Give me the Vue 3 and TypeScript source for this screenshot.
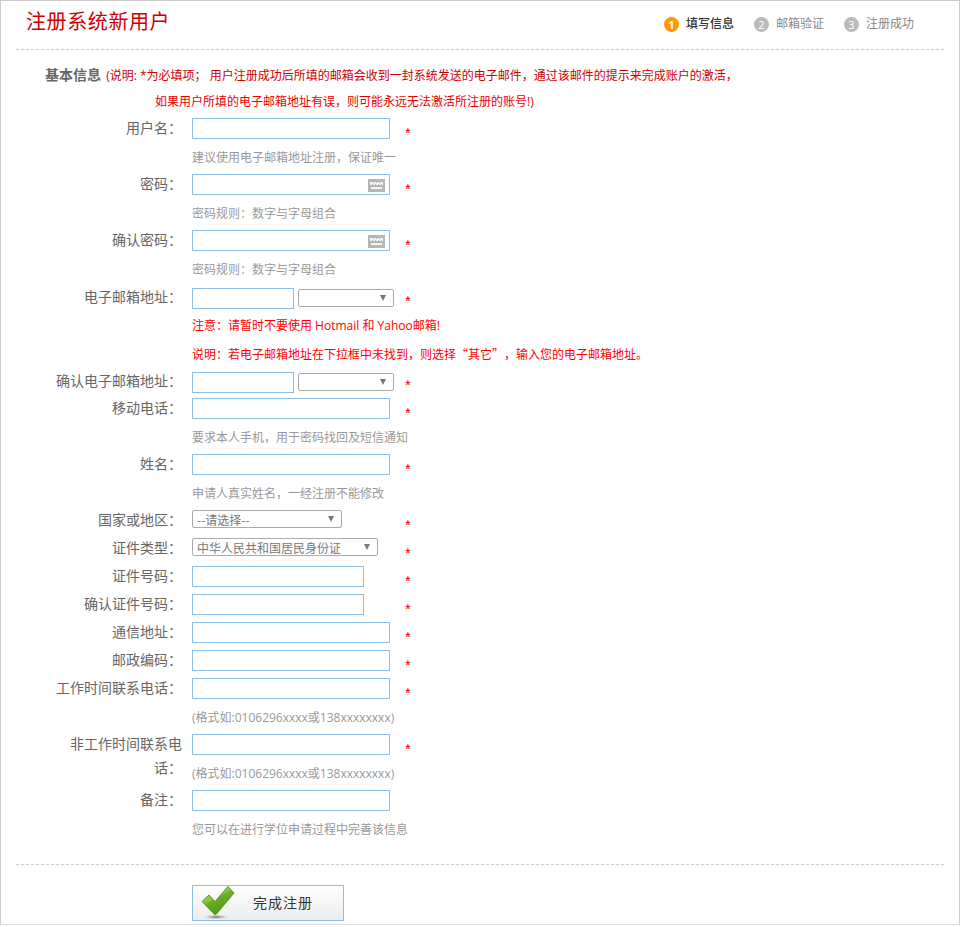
<script setup lang="ts">
type Kind = 'input' | 'short' | 'password' | 'email' | 'select'
interface Row {
  label?: string
  kind?: Kind
  help?: string
  note?: string
  options?: string
  selectWidth?: number
  star?: boolean
  cjkOnly?: boolean
}

const rows: Row[] = [
  { label: '用户名：', kind: 'input', star: true },
  { help: '建议使用电子邮箱地址注册，保证唯一' },
  { label: '密码：', kind: 'password', star: true },
  { help: '密码规则：数字与字母组合' },
  { label: '确认密码：', kind: 'password', star: true },
  { help: '密码规则：数字与字母组合' },
  { label: '电子邮箱地址：', kind: 'email', star: true },
  { note: '注意：请暂时不要使用 Hotmail 和 Yahoo邮箱!' },
  { note: '说明：若电子邮箱地址在下拉框中未找到，则选择“其它”，输入您的电子邮箱地址。', cjkOnly: true },
  { label: '确认电子邮箱地址：', kind: 'email', star: true },
  { label: '移动电话：', kind: 'input', star: true },
  { help: '要求本人手机，用于密码找回及短信通知' },
  { label: '姓名：', kind: 'input', star: true },
  { help: '申请人真实姓名，一经注册不能修改' },
  { label: '国家或地区：', kind: 'select', options: '--请选择--', selectWidth: 150, star: true },
  { label: '证件类型：', kind: 'select', options: '中华人民共和国居民身份证', selectWidth: 186, star: true },
  { label: '证件号码：', kind: 'short', star: true },
  { label: '确认证件号码：', kind: 'short', star: true },
  { label: '通信地址：', kind: 'input', star: true },
  { label: '邮政编码：', kind: 'input', star: true },
  { label: '工作时间联系电话：', kind: 'input', star: true },
  { help: '(格式如:0106296xxxx或138xxxxxxxx)' },
  { label: '非工作时间联系电话：', kind: 'input', star: true },
  { help: '(格式如:0106296xxxx或138xxxxxxxx)' },
  { label: '备注：', kind: 'input' },
  { help: '您可以在进行学位申请过程中完善该信息' },
]

const steps = [
  { n: 1, text: '填写信息', active: true },
  { n: 2, text: '邮箱验证', active: false },
  { n: 3, text: '注册成功', active: false },
]
</script>

<template>
  <div class="page">
    <header class="head">
      <h1 class="title">注册系统新用户</h1>
      <ol class="steps">
        <li v-for="s in steps" :key="s.n" class="step" :class="{ active: s.active }">
          <span class="dot">{{ s.n }}</span>
          <span>{{ s.text }}</span>
        </li>
      </ol>
    </header>

    <section class="intro">
      <p class="intro-line"><b class="section">基本信息</b> <span class="intro-red">(说明: *为必填项； 用户注册成功后所填的邮箱会收到一封系统发送的电子邮件，通过该邮件的提示来完成账户的激活，</span></p>
      <p class="intro-line second">如果用户所填的电子邮箱地址有误，则可能永远无法激活所注册的账号!)</p>
    </section>

    <form class="form" @submit.prevent>
      <div v-for="(r, i) in rows" :key="i" class="row" :class="{ 'row-email': r.kind === 'email' }">
        <label class="label">{{ r.label }}</label>
        <div class="control">
          <input v-if="r.kind === 'input'" class="field" type="text" />
          <input v-else-if="r.kind === 'short'" class="field field-short" type="text" />
          <span v-else-if="r.kind === 'password'" class="pw">
            <input class="field" type="password" />
            <svg class="kbd" width="17" height="13" viewBox="0 0 17 13">
              <rect width="17" height="13" fill="#b6b6b6" />
              <rect x="2" y="3" width="13" height="3" fill="#f4f4f4" />
              <rect x="3" y="8" width="11" height="2" fill="#f4f4f4" />
              <g fill="#b6b6b6">
                <rect x="5" y="3" width="1" height="1" />
                <rect x="8" y="3" width="1" height="1" />
                <rect x="11" y="3" width="1" height="1" />
                <rect x="4" y="5" width="1" height="1" />
                <rect x="7" y="5" width="1" height="1" />
                <rect x="10" y="5" width="1" height="1" />
                <rect x="13" y="5" width="1" height="1" />
              </g>
            </svg>
          </span>
          <template v-else-if="r.kind === 'email'">
            <input class="field field-mail" type="text" />
            <span class="sel-wrap sel-mail">
              <select class="sel"><option></option></select>
            </span>
          </template>
          <span v-else-if="r.kind === 'select'" class="sel-wrap" :style="{ width: r.selectWidth + 'px' }">
            <select class="sel"><option>{{ r.options }}</option></select>
          </span>
          <span v-else-if="r.help" class="help">{{ r.help }}</span>
          <span v-else-if="r.note" class="note" :class="{ 'note-cjk': r.cjkOnly }">{{ r.note }}</span>
        </div>
        <span v-if="r.star" class="star">*</span>
      </div>
    </form>

    <footer class="foot">
      <button class="submit" type="button">
        <svg class="check" width="36" height="34" viewBox="0 0 36 34">
          <defs>
            <linearGradient id="chk" x1="0" y1="0" x2="0.6" y2="1">
              <stop offset="0" stop-color="#a6d85e" />
              <stop offset="0.48" stop-color="#86c53c" />
              <stop offset="0.52" stop-color="#6cae26" />
              <stop offset="1" stop-color="#4f9414" />
            </linearGradient>
            <radialGradient id="shadow">
              <stop offset="0" stop-color="#666" />
              <stop offset="1" stop-color="#ccc" stop-opacity="0" />
            </radialGradient>
          </defs>
          <ellipse cx="15" cy="31" rx="14" ry="2.5" fill="url(#shadow)" />
          <path d="M1 15.5 L8 9 L14 15.5 L27 0.5 L33 7 L15 28.5 L13.5 28.5 Z" fill="url(#chk)" stroke="#5a9a1c" stroke-width="1" stroke-linejoin="round" />
        </svg>
        <span class="submit-text">完成注册</span>
      </button>
    </footer>
  </div>
</template>

<style>
html, body { margin: 0; background: #fff; }
</style>

<style scoped>
.page {
  box-sizing: border-box;
  width: 960px;
  height: 925px;
  border: 1px solid #ccc;
  border-bottom-color: #ddd;
  background: #fff;
  font-family: "Open Sans", "Noto Sans CJK SC", sans-serif;
  font-size: 12px;
  color: #666;
  overflow: hidden;
}
.head {
  display: flex;
  justify-content: space-between;
  align-items: center;
  height: 48px;
  margin: 0 15px;
  padding: 0 30px 0 10px;
  border-bottom: 1px dashed #ccc;
}
.title {
  margin: 0 0 6px;
  font-size: 20px;
  font-weight: 400;
  letter-spacing: 0.6px;
  line-height: 28px;
  color: #c00;
}
.steps {
  display: flex;
  gap: 20px;
  margin: 0 0 2px;
  padding: 0;
  list-style: none;
  color: #888;
}
.step {
  display: flex;
  align-items: center;
  gap: 7px;
  line-height: 18px;
}
.step.active { color: #333; font-weight: 500; }
.dot {
  width: 15px;
  height: 15px;
  border-radius: 50%;
  background: #bbb;
  color: #fff;
  font-size: 11px;
  line-height: 15px;
  text-align: center;
  font-weight: 400;
}
.active .dot { background: #f90; font-weight: 700; }
.intro { padding: 11px 0 0 44px; height: 53px; }
.intro-line { margin: 0; height: 27px; line-height: 27px; white-space: nowrap; color: #e00; }
.intro-line.second { padding-left: 110px; }
.section { font-size: 14px; font-weight: 700; color: #666; }
.intro-red { margin-left: 2px; color: #c00; }
.row {
  display: flex;
  height: 28px;
}
.label {
  box-sizing: border-box;
  width: 130px;
  margin-left: 51px;
  text-align: right;
  font-size: 14px;
  line-height: 24px;
  padding-top: 2px;
  color: #666;
}
.row-email .label { padding-top: 3px; }
.control {
  box-sizing: border-box;
  width: 213px;
  margin-left: 10px;
  padding-top: 4px;
  display: flex;
  align-items: flex-start;
  gap: 4px;
}
.row-email .control { padding-top: 6px; }
.field {
  box-sizing: border-box;
  display: block;
  width: 198px;
  height: 21px;
  margin: 0;
  padding: 0 4px;
  border: 1px solid #8dbfe6;
  background: #fff;
  outline: none;
}
.field-short { width: 172px; }
.field-mail { width: 102px; }
.pw { position: relative; display: block; width: 198px; }
.kbd { position: absolute; top: 5px; right: 5px; }
.sel-wrap {
  position: relative;
  display: block;
  box-sizing: border-box;
  height: 18px;
}
.sel-mail { width: 96px; margin-top: 1px; }
.sel-wrap::after {
  content: "";
  position: absolute;
  right: 8px;
  top: 6px;
  border-style: solid;
  border-width: 6px 3.5px 0;
  border-color: #777 transparent transparent;
  pointer-events: none;
}
.sel {
  appearance: none;
  box-sizing: border-box;
  display: block;
  width: 100%;
  height: 18px;
  margin: 0;
  padding: 1px 0 0 4px;
  border: 1px solid #aaa;
  border-radius: 2px;
  background: #fff;
  font-family: "Noto Sans CJK SC", sans-serif;
  font-size: 12px;
  line-height: 16px;
  color: #777;
  outline: none;
}
.help, .note {
  margin-top: -2px;
  font-size: 12px;
  line-height: 28px;
  white-space: nowrap;
}
.help { color: #999; }
.note { color: #f00; }
.note-cjk {
  font-family: "Noto Sans CJK SC", sans-serif;
  text-spacing-trim: space-all;
}
.star {
  margin-left: 0;
  padding-top: 9px;
  font-family: "Liberation Sans", sans-serif;
  font-size: 15px;
  line-height: 20px;
  color: #e00;
}
.foot {
  margin: 22px 15px 0;
  padding: 20px 0 0 176px;
  border-top: 1px dashed #ccc;
}
.submit {
  box-sizing: border-box;
  display: flex;
  align-items: flex-start;
  width: 152px;
  height: 36px;
  margin: 0;
  padding: 0;
  border: 1px solid #8dbfe6;
  background: linear-gradient(#fff, #ececec);
  font-family: "Noto Sans CJK SC", sans-serif;
  color: #333;
}
.check { flex: none; margin-left: 8px; }
.submit-text {
  margin-left: 16px;
  font-size: 14px;
  line-height: 33px;
  letter-spacing: 1px;
}
</style>
